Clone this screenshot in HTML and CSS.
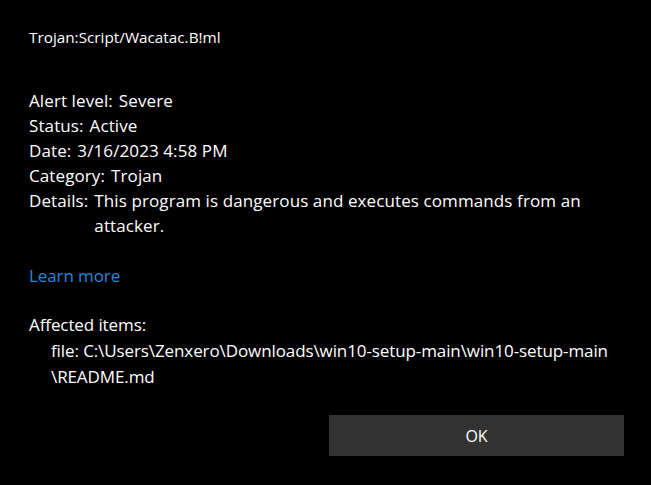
FILE: index.html
```html
<!DOCTYPE html>
<html>
<head>
<meta charset="utf-8">
<link rel="stylesheet" href="styles.css">
</head>
<body>
<div class="dialog">
  <div class="title">Trojan:Script/Wacatac.B!ml</div>
  <div class="info">
    <div class="row"><span class="label">Alert level:</span><span class="value">Severe</span></div>
    <div class="row"><span class="label">Status:</span><span class="value">Active</span></div>
    <div class="row"><span class="label">Date:</span><span class="value">3/16/2023 4:58 PM</span></div>
    <div class="row"><span class="label">Category:</span><span class="value">Trojan</span></div>
    <div class="row"><span class="label">Details:</span><span class="value details">This program is dangerous and executes commands from an attacker.</span></div>
  </div>
  <a class="link" href="#">Learn more</a>
  <div class="affected">
    <div class="aff-title">Affected items:</div>
    <div class="aff-item">file: C:\Users\Zenxero\Downloads\win10-setup-main\win10-setup-main \README.md</div>
  </div>
  <div class="actions">
    <button class="ok">OK</button>
  </div>
</div>
</body>
</html>
```
FILE: styles.css
```css
html, body {
  margin: 0;
  padding: 0;
  background: #000;
}
.dialog {
  width: 651px;
  height: 485px;
  box-sizing: border-box;
  padding: 26px 0 0 29px;
  color: #fff;
  font-family: "Open Sans", "Noto Sans", sans-serif;
  display: flex;
  flex-direction: column;
}
.title {
  font-size: 15.3px;
  line-height: 22px;
}
.info {
  margin-top: 40px;
  font-size: 17px;
  line-height: 25px;
  letter-spacing: 0.1px;
}
.row {
  display: flex;
  gap: 6px;
}
.value.details {
  width: 510px;
}
.link {
  margin-top: 25px;
  font-size: 17px;
  line-height: 25px;
  color: #2387d9;
  text-decoration: none;
  letter-spacing: -0.1px;
  align-self: flex-start;
}
.affected {
  margin-top: 24px;
  font-size: 17px;
  line-height: 26px;
  letter-spacing: -0.1px;
}
.aff-item {
  padding-left: 22px;
  width: 560px;
}
.actions {
  margin-top: 25px;
  display: flex;
  justify-content: flex-end;
  padding-right: 27px;
}
.ok {
  width: 295px;
  height: 41px;
  background: #333333;
  border: none;
  color: #fff;
  font-family: "Open Sans", "Noto Sans", sans-serif;
  font-size: 16px;
  padding: 0;
}
```
